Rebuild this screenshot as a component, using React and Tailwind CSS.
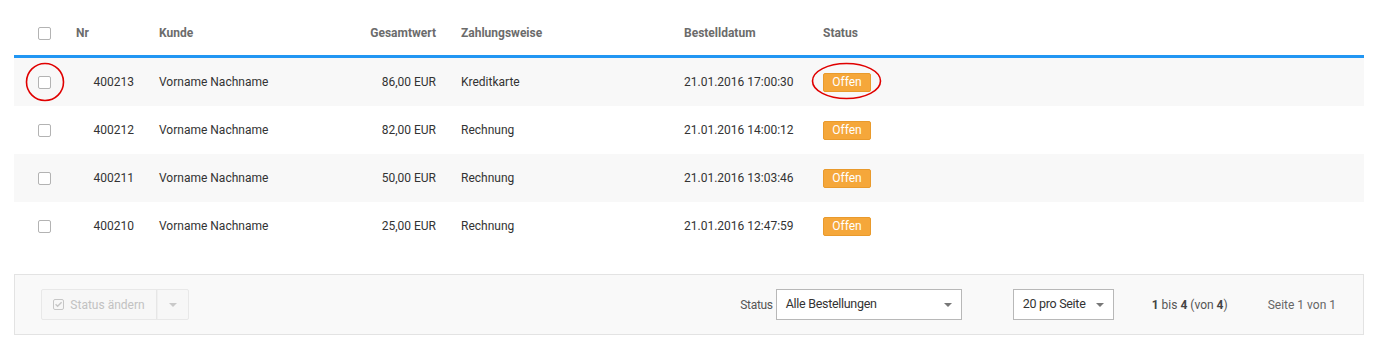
import React from "react";

const rows = [
  { nr: "400213", kunde: "Vorname Nachname", wert: "86,00 EUR", zahl: "Kreditkarte", datum: "21.01.2016 17:00:30", gray: true },
  { nr: "400212", kunde: "Vorname Nachname", wert: "82,00 EUR", zahl: "Rechnung", datum: "21.01.2016 14:00:12", gray: false },
  { nr: "400211", kunde: "Vorname Nachname", wert: "50,00 EUR", zahl: "Rechnung", datum: "21.01.2016 13:03:46", gray: true },
  { nr: "400210", kunde: "Vorname Nachname", wert: "25,00 EUR", zahl: "Rechnung", datum: "21.01.2016 12:47:59", gray: false },
];

function Checkbox() {
  return <span className="block w-[13px] h-[13px] rounded-[2px] border border-[#b3b3b3] bg-white" />;
}

function Caret({ color = "#777" }) {
  return (
    <svg width="8" height="4" viewBox="0 0 8 4" className="block">
      <path d="M0 0 L8 0 L4 4 Z" fill={color} />
    </svg>
  );
}

const grid = "grid grid-cols-[62px_58px_180px_122px_248px_139px_1fr]";

export default function App() {
  return (
    <div className="relative w-[1400px] h-[347px] bg-white text-[12px]" style={{ fontFamily: "Roboto, 'Open Sans', sans-serif" }}>
      <div className="px-[14px] pt-[1px] w-[1378px]">
        {/* Header */}
        <div className={`${grid} h-[54px] pt-[10px] items-center font-bold text-[#6b6b6b]`}>
          <div className="pl-[24px]"><Checkbox /></div>
          <div>Nr</div>
          <div className="pl-[25px]">Kunde</div>
          <div className="text-right">Gesamtwert</div>
          <div className="pl-[25px]">Zahlungsweise</div>
          <div>Bestelldatum</div>
          <div>Status</div>
        </div>
        <div className="h-[3px] bg-[#2196f3]" />
        {rows.map((r) => (
          <div key={r.nr} className={`${grid} h-[48px] items-center text-[#333] ${r.gray ? "bg-[#f8f8f8]" : "bg-white"}`}>
            <div className="pl-[24px]"><Checkbox /></div>
            <div className="text-right">{r.nr}</div>
            <div className="pl-[25px]">{r.kunde}</div>
            <div className="text-right">{r.wert}</div>
            <div className="pl-[25px]">{r.zahl}</div>
            <div>{r.datum}</div>
            <div>
              <span className="flex items-center justify-center w-[48px] h-[19px] rounded-[2px] border border-[#e99a2c] bg-[#f5a73a] text-white">Offen</span>
            </div>
          </div>
        ))}

        {/* Footer */}
        <div className="mt-[24px] h-[61px] border border-[#e3e3e3] bg-[#f9f9f9] flex items-center pl-[26px] pr-[27px] text-[#555]">
          <div className="flex h-[31px] border border-[#e8e8e8] rounded-[2px] bg-[#f7f7f7] text-[#c2c2c2]">
            <div className="w-[115px] flex items-center justify-center gap-[6px] border-r border-[#e6e6e6]">
              <svg width="11" height="11" viewBox="0 0 11 11" className="block">
                <rect x="0.5" y="0.5" width="10" height="10" rx="1.5" fill="none" stroke="#c6c6c6" strokeWidth="1" />
                <path d="M2.6 5.3 L4.6 7.3 L8.6 3.2" fill="none" stroke="#c6c6c6" strokeWidth="1.4" />
              </svg>
              <span className="text-[12px]">Status ändern</span>
            </div>
            <div className="w-[31px] flex items-center justify-center border-l border-[#f0f0f0]">
              <Caret color="#c9c9c9" />
            </div>
          </div>
          <div className="flex-1" />
          <span className="mr-[3px] text-[12px] tracking-[-0.3px]">Status</span>
          <div className="w-[186px] h-[31px] border border-[#b8b8b8] bg-white flex items-center pl-[9px] pr-[9px] text-[#333]">
            <span className="flex-1 text-[12.5px] tracking-[-0.3px]">Alle Bestellungen</span>
            <Caret color="#777" />
          </div>
          <div className="w-[51px]" />
          <div className="w-[101px] h-[31px] border border-[#b8b8b8] bg-white flex items-center pl-[9px] pr-[9px] text-[#333]">
            <span className="flex-1 text-[12.5px] tracking-[-0.3px]">20 pro Seite</span>
            <Caret color="#777" />
          </div>
          <div className="w-[38px]" />
          <span className="text-[#555]"><b className="font-bold text-[#444]">1</b> bis <b className="font-bold text-[#444]">4</b> (von <b className="font-bold text-[#444]">4</b>)</span>
          <div className="w-[40px]" />
          <span className="text-[#666]">Seite 1 von 1</span>
        </div>
      </div>

      {/* Red annotation marks */}
      <svg className="absolute inset-0 pointer-events-none" width="1400" height="347">
        <circle cx="45" cy="82" r="18.5" fill="none" stroke="#e00000" strokeWidth="1.6" />
        <ellipse cx="846.5" cy="81" rx="34" ry="17.5" fill="none" stroke="#e00000" strokeWidth="1.6" />
      </svg>
    </div>
  );
}
